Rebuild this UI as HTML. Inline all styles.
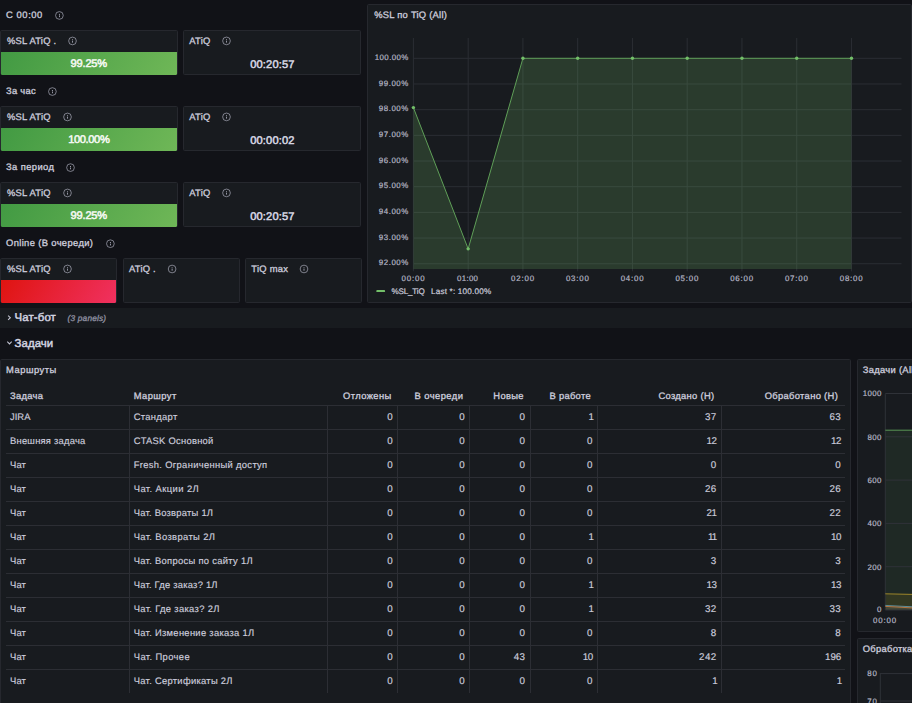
<!DOCTYPE html>
<html lang="ru">
<head>
<meta charset="utf-8">
<title>Dashboard</title>
<style>
html,body{margin:0;padding:0;}
body{width:912px;height:703px;overflow:hidden;background:#111217;position:relative;
 font-family:"Liberation Sans",sans-serif;color:#ccccdc;text-rendering:geometricPrecision;}
.t{position:absolute;white-space:nowrap;font-weight:400;-webkit-text-stroke:0.32px currentColor;}
.t.b{-webkit-text-stroke:0;}
.t.h{-webkit-text-stroke:0.45px currentColor;}
.t.r{-webkit-text-stroke:0.16px currentColor;}
.t.v{-webkit-text-stroke:0.5px currentColor;}
.p{position:absolute;box-sizing:border-box;background:#181b1f;border:1px solid #26282e;border-radius:1.5px;}
.ic{position:absolute;overflow:visible;}
.bar{position:absolute;border-radius:0 0 1.5px 1.5px;}
.hl{position:absolute;height:1px;background:#2c2e34;}
.vl{position:absolute;width:1px;background:#2c2e34;}
svg.ch{position:absolute;left:0;top:0;}
svg.ch text{font-family:"Liberation Sans",sans-serif;fill:#ccccdc;text-rendering:geometricPrecision;stroke:#ccccdc;stroke-width:0.2px;}
svg.ch text.ax{fill:#b4b5c4;stroke:#b4b5c4;}
</style>
</head>
<body>

<span class="t" style="top:8.10px;font-size:9.40px;line-height:14px;letter-spacing:0.582px;left:6.00px;">C 00:00</span>
<svg class="ic" style="left:53px;top:9px" width="12" height="12" viewBox="0 0 12 12"><g transform="translate(6.40 6.45)"><circle cx="0" cy="0" r="3.85" fill="none" stroke="#b4b5c5" stroke-width="0.65"/><rect x="-0.4" y="-0.05" width="0.8" height="1.75" fill="#b4b5c5"/><rect x="-0.45" y="-1.55" width="0.9" height="0.85" fill="#c4c5d3"/></g></svg>
<span class="t" style="top:84.10px;font-size:9.40px;line-height:14px;letter-spacing:0.276px;left:6.00px;">За час</span>
<svg class="ic" style="left:46px;top:85px" width="12" height="12" viewBox="0 0 12 12"><g transform="translate(6.40 6.55)"><circle cx="0" cy="0" r="3.85" fill="none" stroke="#b4b5c5" stroke-width="0.65"/><rect x="-0.4" y="-0.05" width="0.8" height="1.75" fill="#b4b5c5"/><rect x="-0.45" y="-1.55" width="0.9" height="0.85" fill="#c4c5d3"/></g></svg>
<span class="t" style="top:160.10px;font-size:9.40px;line-height:14px;letter-spacing:0.409px;left:6.00px;">За период</span>
<svg class="ic" style="left:64px;top:161px" width="12" height="12" viewBox="0 0 12 12"><g transform="translate(6.50 6.60)"><circle cx="0" cy="0" r="3.85" fill="none" stroke="#b4b5c5" stroke-width="0.65"/><rect x="-0.4" y="-0.05" width="0.8" height="1.75" fill="#b4b5c5"/><rect x="-0.45" y="-1.55" width="0.9" height="0.85" fill="#c4c5d3"/></g></svg>
<span class="t" style="top:236.10px;font-size:9.40px;line-height:14px;letter-spacing:0.358px;left:6.00px;">Online (В очереди)</span>
<svg class="ic" style="left:104px;top:237px" width="12" height="12" viewBox="0 0 12 12"><g transform="translate(6.40 6.70)"><circle cx="0" cy="0" r="3.85" fill="none" stroke="#b4b5c5" stroke-width="0.65"/><rect x="-0.4" y="-0.05" width="0.8" height="1.75" fill="#b4b5c5"/><rect x="-0.45" y="-1.55" width="0.9" height="0.85" fill="#c4c5d3"/></g></svg>
<div class="p" style="left:0.00px;top:30.00px;width:177.50px;height:45.00px;"></div>
<span class="t" style="top:33.60px;font-size:9.40px;line-height:14px;letter-spacing:0.231px;left:7.00px;">%SL ATiQ .</span>
<svg class="ic" style="left:66px;top:34px" width="12" height="12" viewBox="0 0 12 12"><g transform="translate(6.50 6.95)"><circle cx="0" cy="0" r="3.85" fill="none" stroke="#b4b5c5" stroke-width="0.65"/><rect x="-0.4" y="-0.05" width="0.8" height="1.75" fill="#b4b5c5"/><rect x="-0.45" y="-1.55" width="0.9" height="0.85" fill="#c4c5d3"/></g></svg>
<div class="bar" style="left:1px;top:52.00px;width:176px;height:22.80px;background:linear-gradient(120deg,#429a43,#6fb757)"></div>
<span class="t v" style="top:56.70px;font-size:11.10px;line-height:14px;letter-spacing:-0.191px;color:#f7faf5;left:70.55px;">99.25%</span>
<div class="p" style="left:183.25px;top:30.00px;width:177.50px;height:45.00px;"></div>
<span class="t" style="top:33.60px;font-size:9.40px;line-height:14px;letter-spacing:0.284px;left:189.25px;">ATiQ</span>
<svg class="ic" style="left:220px;top:34px" width="12" height="12" viewBox="0 0 12 12"><g transform="translate(6.50 6.90)"><circle cx="0" cy="0" r="3.85" fill="none" stroke="#b4b5c5" stroke-width="0.65"/><rect x="-0.4" y="-0.05" width="0.8" height="1.75" fill="#b4b5c5"/><rect x="-0.45" y="-1.55" width="0.9" height="0.85" fill="#c4c5d3"/></g></svg>
<span class="t v" style="top:57.50px;font-size:11.10px;line-height:14px;letter-spacing:0.130px;color:#d8d9e4;left:250.27px;">00:20:57</span>
<div class="p" style="left:0.00px;top:106.00px;width:177.50px;height:45.00px;"></div>
<span class="t" style="top:109.60px;font-size:9.40px;line-height:14px;letter-spacing:0.254px;left:7.00px;">%SL ATiQ</span>
<svg class="ic" style="left:61px;top:110px" width="12" height="12" viewBox="0 0 12 12"><g transform="translate(6.50 6.95)"><circle cx="0" cy="0" r="3.85" fill="none" stroke="#b4b5c5" stroke-width="0.65"/><rect x="-0.4" y="-0.05" width="0.8" height="1.75" fill="#b4b5c5"/><rect x="-0.45" y="-1.55" width="0.9" height="0.85" fill="#c4c5d3"/></g></svg>
<div class="bar" style="left:1px;top:128.00px;width:176px;height:22.80px;background:linear-gradient(120deg,#429a43,#6fb757)"></div>
<span class="t v" style="top:132.70px;font-size:11.10px;line-height:14px;letter-spacing:-0.367px;color:#f7faf5;left:68.17px;">100.00%</span>
<div class="p" style="left:183.25px;top:106.00px;width:177.50px;height:45.00px;"></div>
<span class="t" style="top:109.60px;font-size:9.40px;line-height:14px;letter-spacing:0.284px;left:189.25px;">ATiQ</span>
<svg class="ic" style="left:220px;top:110px" width="12" height="12" viewBox="0 0 12 12"><g transform="translate(6.50 6.90)"><circle cx="0" cy="0" r="3.85" fill="none" stroke="#b4b5c5" stroke-width="0.65"/><rect x="-0.4" y="-0.05" width="0.8" height="1.75" fill="#b4b5c5"/><rect x="-0.45" y="-1.55" width="0.9" height="0.85" fill="#c4c5d3"/></g></svg>
<span class="t v" style="top:133.50px;font-size:11.10px;line-height:14px;letter-spacing:0.130px;color:#d8d9e4;left:250.27px;">00:00:02</span>
<div class="p" style="left:0.00px;top:182.00px;width:177.50px;height:45.00px;"></div>
<span class="t" style="top:185.60px;font-size:9.40px;line-height:14px;letter-spacing:0.254px;left:7.00px;">%SL ATiQ</span>
<svg class="ic" style="left:61px;top:186px" width="12" height="12" viewBox="0 0 12 12"><g transform="translate(6.50 6.95)"><circle cx="0" cy="0" r="3.85" fill="none" stroke="#b4b5c5" stroke-width="0.65"/><rect x="-0.4" y="-0.05" width="0.8" height="1.75" fill="#b4b5c5"/><rect x="-0.45" y="-1.55" width="0.9" height="0.85" fill="#c4c5d3"/></g></svg>
<div class="bar" style="left:1px;top:204.00px;width:176px;height:22.80px;background:linear-gradient(120deg,#429a43,#6fb757)"></div>
<span class="t v" style="top:208.70px;font-size:11.10px;line-height:14px;letter-spacing:-0.191px;color:#f7faf5;left:70.55px;">99.25%</span>
<div class="p" style="left:183.25px;top:182.00px;width:177.50px;height:45.00px;"></div>
<span class="t" style="top:185.60px;font-size:9.40px;line-height:14px;letter-spacing:0.284px;left:189.25px;">ATiQ</span>
<svg class="ic" style="left:220px;top:186px" width="12" height="12" viewBox="0 0 12 12"><g transform="translate(6.50 6.90)"><circle cx="0" cy="0" r="3.85" fill="none" stroke="#b4b5c5" stroke-width="0.65"/><rect x="-0.4" y="-0.05" width="0.8" height="1.75" fill="#b4b5c5"/><rect x="-0.45" y="-1.55" width="0.9" height="0.85" fill="#c4c5d3"/></g></svg>
<span class="t v" style="top:209.50px;font-size:11.10px;line-height:14px;letter-spacing:0.130px;color:#d8d9e4;left:250.27px;">00:20:57</span>
<div class="p" style="left:0.00px;top:258.00px;width:116.75px;height:45.00px;"></div>
<span class="t" style="top:261.60px;font-size:9.40px;line-height:14px;letter-spacing:0.254px;left:7.00px;">%SL ATiQ</span>
<svg class="ic" style="left:61px;top:262px" width="12" height="12" viewBox="0 0 12 12"><g transform="translate(6.50 6.95)"><circle cx="0" cy="0" r="3.85" fill="none" stroke="#b4b5c5" stroke-width="0.65"/><rect x="-0.4" y="-0.05" width="0.8" height="1.75" fill="#b4b5c5"/><rect x="-0.45" y="-1.55" width="0.9" height="0.85" fill="#c4c5d3"/></g></svg>
<div class="bar" style="left:1px;top:280.00px;width:115.2px;height:22.8px;background:linear-gradient(120deg,#df1410,#f03160)"></div>
<div class="p" style="left:122.50px;top:258.00px;width:117.00px;height:45.00px;"></div>
<span class="t" style="top:261.60px;font-size:9.40px;line-height:14px;letter-spacing:0.235px;left:129.00px;">ATiQ .</span>
<svg class="ic" style="left:166px;top:263px" width="12" height="12" viewBox="0 0 12 12"><g transform="translate(6.10 6.00)"><circle cx="0" cy="0" r="3.85" fill="none" stroke="#b4b5c5" stroke-width="0.65"/><rect x="-0.4" y="-0.05" width="0.8" height="1.75" fill="#b4b5c5"/><rect x="-0.45" y="-1.55" width="0.9" height="0.85" fill="#c4c5d3"/></g></svg>
<div class="p" style="left:245.00px;top:258.00px;width:117.00px;height:45.00px;"></div>
<span class="t" style="top:261.60px;font-size:9.40px;line-height:14px;letter-spacing:0.262px;left:251.30px;">TiQ max</span>
<svg class="ic" style="left:298px;top:263px" width="12" height="12" viewBox="0 0 12 12"><g transform="translate(6.00 6.00)"><circle cx="0" cy="0" r="3.85" fill="none" stroke="#b4b5c5" stroke-width="0.65"/><rect x="-0.4" y="-0.05" width="0.8" height="1.75" fill="#b4b5c5"/><rect x="-0.45" y="-1.55" width="0.9" height="0.85" fill="#c4c5d3"/></g></svg>
<div style="position:absolute;left:0;top:308px;width:912px;height:20px;background:#181b1f"></div>
<svg class="ic" style="left:6px;top:312px" width="8" height="10" viewBox="0 0 8 10"><path d="M2.1 3.55 L4.35 5.7 L2.1 7.85" fill="none" stroke="#c4c5d4" stroke-width="1.05"/></svg>
<span class="t h" style="top:310.50px;font-size:11.40px;line-height:14px;letter-spacing:0.122px;color:#d5d6e3;left:14.60px;">Чат-бот</span>
<span class="t" style="top:310.90px;font-size:8.30px;line-height:14px;letter-spacing:0.179px;font-style:italic;color:#8f90a0;left:67.60px;">(3 panels)</span>
<svg class="ic" style="left:5px;top:338px" width="10" height="8" viewBox="0 0 10 8"><path d="M2.3 3.7 L4.5 5.9 L6.7 3.7" fill="none" stroke="#c4c5d4" stroke-width="1.05"/></svg>
<span class="t h" style="top:337.30px;font-size:11.40px;line-height:14px;letter-spacing:0.071px;color:#d5d6e3;left:14.60px;">Задачи</span>
<div class="p" style="left:0.00px;top:359.00px;width:851.00px;height:361.00px;"></div>
<span class="t" style="top:363.10px;font-size:9.40px;line-height:14px;letter-spacing:0.523px;left:6.00px;">Маршруты</span>
<span class="t" style="top:389.10px;font-size:9.40px;line-height:14px;letter-spacing:0.285px;left:10.00px;">Задача</span>
<span class="t" style="top:389.10px;font-size:9.40px;line-height:14px;letter-spacing:0.420px;left:133.75px;">Маршрут</span>
<span class="t" style="top:389.10px;font-size:9.40px;line-height:14px;letter-spacing:0.395px;left:343.00px;">Отложены</span>
<span class="t" style="top:389.10px;font-size:9.40px;line-height:14px;letter-spacing:0.443px;left:414.50px;">В очереди</span>
<span class="t" style="top:389.10px;font-size:9.40px;line-height:14px;letter-spacing:0.341px;left:493.30px;">Новые</span>
<span class="t" style="top:389.10px;font-size:9.40px;line-height:14px;letter-spacing:0.291px;left:549.50px;">В работе</span>
<span class="t" style="top:389.10px;font-size:9.40px;line-height:14px;letter-spacing:0.290px;left:658.50px;">Создано (Н)</span>
<span class="t" style="top:389.10px;font-size:9.40px;line-height:14px;letter-spacing:0.317px;left:764.75px;">Обработано (Н)</span>
<div class="hl" style="left:6px;top:404.50px;width:839px"></div>
<span class="t r" style="top:409.60px;font-size:9.40px;line-height:14px;letter-spacing:0.032px;left:10.00px;">JIRA</span>
<span class="t r" style="top:409.60px;font-size:9.40px;line-height:14px;letter-spacing:0.306px;left:133.75px;">Стандарт</span>
<span class="t r" style="top:410.60px;font-size:9.80px;line-height:14px;letter-spacing:0.350px;left:387.20px;">0</span>
<span class="t r" style="top:410.60px;font-size:9.80px;line-height:14px;letter-spacing:0.350px;left:459.20px;">0</span>
<span class="t r" style="top:410.60px;font-size:9.80px;line-height:14px;letter-spacing:0.350px;left:519.45px;">0</span>
<span class="t r" style="top:410.60px;font-size:9.80px;line-height:14px;letter-spacing:-1.150px;left:588.45px;">1</span>
<span class="t r" style="top:410.60px;font-size:9.80px;line-height:14px;letter-spacing:0.350px;left:704.90px;">37</span>
<span class="t r" style="top:410.60px;font-size:9.80px;line-height:14px;letter-spacing:0.350px;left:829.40px;">63</span>
<div class="hl" style="left:6px;top:428.50px;width:839px"></div>
<span class="t r" style="top:433.60px;font-size:9.40px;line-height:14px;letter-spacing:0.240px;left:10.00px;">Внешняя задача</span>
<span class="t r" style="top:433.60px;font-size:9.40px;line-height:14px;letter-spacing:0.261px;left:133.75px;">CTASK Основной</span>
<span class="t r" style="top:434.60px;font-size:9.80px;line-height:14px;letter-spacing:0.350px;left:387.20px;">0</span>
<span class="t r" style="top:434.60px;font-size:9.80px;line-height:14px;letter-spacing:0.350px;left:459.20px;">0</span>
<span class="t r" style="top:434.60px;font-size:9.80px;line-height:14px;letter-spacing:0.350px;left:519.45px;">0</span>
<span class="t r" style="top:434.60px;font-size:9.80px;line-height:14px;letter-spacing:0.350px;left:586.95px;">0</span>
<span class="t r" style="top:434.60px;font-size:9.80px;line-height:14px;letter-spacing:-0.400px;left:706.40px;">12</span>
<span class="t r" style="top:434.60px;font-size:9.80px;line-height:14px;letter-spacing:-0.400px;left:830.90px;">12</span>
<div class="hl" style="left:6px;top:452.50px;width:839px"></div>
<span class="t r" style="top:457.60px;font-size:9.40px;line-height:14px;letter-spacing:0.136px;left:10.00px;">Чат</span>
<span class="t r" style="top:457.60px;font-size:9.40px;line-height:14px;letter-spacing:0.326px;left:133.75px;">Fresh. Ограниченный доступ</span>
<span class="t r" style="top:458.60px;font-size:9.80px;line-height:14px;letter-spacing:0.350px;left:387.20px;">0</span>
<span class="t r" style="top:458.60px;font-size:9.80px;line-height:14px;letter-spacing:0.350px;left:459.20px;">0</span>
<span class="t r" style="top:458.60px;font-size:9.80px;line-height:14px;letter-spacing:0.350px;left:519.45px;">0</span>
<span class="t r" style="top:458.60px;font-size:9.80px;line-height:14px;letter-spacing:0.350px;left:586.95px;">0</span>
<span class="t r" style="top:458.60px;font-size:9.80px;line-height:14px;letter-spacing:0.350px;left:710.70px;">0</span>
<span class="t r" style="top:458.60px;font-size:9.80px;line-height:14px;letter-spacing:0.350px;left:835.20px;">0</span>
<div class="hl" style="left:6px;top:476.50px;width:839px"></div>
<span class="t r" style="top:481.60px;font-size:9.40px;line-height:14px;letter-spacing:0.136px;left:10.00px;">Чат</span>
<span class="t r" style="top:481.60px;font-size:9.40px;line-height:14px;letter-spacing:0.419px;left:133.75px;">Чат. Акции 2Л</span>
<span class="t r" style="top:482.60px;font-size:9.80px;line-height:14px;letter-spacing:0.350px;left:387.20px;">0</span>
<span class="t r" style="top:482.60px;font-size:9.80px;line-height:14px;letter-spacing:0.350px;left:459.20px;">0</span>
<span class="t r" style="top:482.60px;font-size:9.80px;line-height:14px;letter-spacing:0.350px;left:519.45px;">0</span>
<span class="t r" style="top:482.60px;font-size:9.80px;line-height:14px;letter-spacing:0.350px;left:586.95px;">0</span>
<span class="t r" style="top:482.60px;font-size:9.80px;line-height:14px;letter-spacing:0.350px;left:704.90px;">26</span>
<span class="t r" style="top:482.60px;font-size:9.80px;line-height:14px;letter-spacing:0.350px;left:829.40px;">26</span>
<div class="hl" style="left:6px;top:500.50px;width:839px"></div>
<span class="t r" style="top:505.60px;font-size:9.40px;line-height:14px;letter-spacing:0.136px;left:10.00px;">Чат</span>
<span class="t r" style="top:505.60px;font-size:9.40px;line-height:14px;letter-spacing:0.244px;left:133.75px;">Чат. Возвраты 1Л</span>
<span class="t r" style="top:506.60px;font-size:9.80px;line-height:14px;letter-spacing:0.350px;left:387.20px;">0</span>
<span class="t r" style="top:506.60px;font-size:9.80px;line-height:14px;letter-spacing:0.350px;left:459.20px;">0</span>
<span class="t r" style="top:506.60px;font-size:9.80px;line-height:14px;letter-spacing:0.350px;left:519.45px;">0</span>
<span class="t r" style="top:506.60px;font-size:9.80px;line-height:14px;letter-spacing:0.350px;left:586.95px;">0</span>
<span class="t r" style="top:506.60px;font-size:9.80px;line-height:14px;letter-spacing:-0.400px;left:706.40px;">21</span>
<span class="t r" style="top:506.60px;font-size:9.80px;line-height:14px;letter-spacing:0.350px;left:829.40px;">22</span>
<div class="hl" style="left:6px;top:524.50px;width:839px"></div>
<span class="t r" style="top:529.60px;font-size:9.40px;line-height:14px;letter-spacing:0.136px;left:10.00px;">Чат</span>
<span class="t r" style="top:529.60px;font-size:9.40px;line-height:14px;letter-spacing:0.369px;left:133.75px;">Чат. Возвраты 2Л</span>
<span class="t r" style="top:530.60px;font-size:9.80px;line-height:14px;letter-spacing:0.350px;left:387.20px;">0</span>
<span class="t r" style="top:530.60px;font-size:9.80px;line-height:14px;letter-spacing:0.350px;left:459.20px;">0</span>
<span class="t r" style="top:530.60px;font-size:9.80px;line-height:14px;letter-spacing:0.350px;left:519.45px;">0</span>
<span class="t r" style="top:530.60px;font-size:9.80px;line-height:14px;letter-spacing:-1.150px;left:588.45px;">1</span>
<span class="t r" style="top:530.60px;font-size:9.80px;line-height:14px;letter-spacing:-0.787px;left:707.90px;">11</span>
<span class="t r" style="top:530.60px;font-size:9.80px;line-height:14px;letter-spacing:-0.400px;left:830.90px;">10</span>
<div class="hl" style="left:6px;top:548.50px;width:839px"></div>
<span class="t r" style="top:553.60px;font-size:9.40px;line-height:14px;letter-spacing:0.136px;left:10.00px;">Чат</span>
<span class="t r" style="top:553.60px;font-size:9.40px;line-height:14px;letter-spacing:0.308px;left:133.75px;">Чат. Вопросы по сайту 1Л</span>
<span class="t r" style="top:554.60px;font-size:9.80px;line-height:14px;letter-spacing:0.350px;left:387.20px;">0</span>
<span class="t r" style="top:554.60px;font-size:9.80px;line-height:14px;letter-spacing:0.350px;left:459.20px;">0</span>
<span class="t r" style="top:554.60px;font-size:9.80px;line-height:14px;letter-spacing:0.350px;left:519.45px;">0</span>
<span class="t r" style="top:554.60px;font-size:9.80px;line-height:14px;letter-spacing:0.350px;left:586.95px;">0</span>
<span class="t r" style="top:554.60px;font-size:9.80px;line-height:14px;letter-spacing:0.350px;left:710.70px;">3</span>
<span class="t r" style="top:554.60px;font-size:9.80px;line-height:14px;letter-spacing:0.350px;left:835.20px;">3</span>
<div class="hl" style="left:6px;top:572.50px;width:839px"></div>
<span class="t r" style="top:577.60px;font-size:9.40px;line-height:14px;letter-spacing:0.136px;left:10.00px;">Чат</span>
<span class="t r" style="top:577.60px;font-size:9.40px;line-height:14px;letter-spacing:0.229px;left:133.75px;">Чат. Где заказ? 1Л</span>
<span class="t r" style="top:578.60px;font-size:9.80px;line-height:14px;letter-spacing:0.350px;left:387.20px;">0</span>
<span class="t r" style="top:578.60px;font-size:9.80px;line-height:14px;letter-spacing:0.350px;left:459.20px;">0</span>
<span class="t r" style="top:578.60px;font-size:9.80px;line-height:14px;letter-spacing:0.350px;left:519.45px;">0</span>
<span class="t r" style="top:578.60px;font-size:9.80px;line-height:14px;letter-spacing:-1.150px;left:588.45px;">1</span>
<span class="t r" style="top:578.60px;font-size:9.80px;line-height:14px;letter-spacing:-0.400px;left:706.40px;">13</span>
<span class="t r" style="top:578.60px;font-size:9.80px;line-height:14px;letter-spacing:-0.400px;left:830.90px;">13</span>
<div class="hl" style="left:6px;top:596.50px;width:839px"></div>
<span class="t r" style="top:601.60px;font-size:9.40px;line-height:14px;letter-spacing:0.136px;left:10.00px;">Чат</span>
<span class="t r" style="top:601.60px;font-size:9.40px;line-height:14px;letter-spacing:0.340px;left:133.75px;">Чат. Где заказ? 2Л</span>
<span class="t r" style="top:602.60px;font-size:9.80px;line-height:14px;letter-spacing:0.350px;left:387.20px;">0</span>
<span class="t r" style="top:602.60px;font-size:9.80px;line-height:14px;letter-spacing:0.350px;left:459.20px;">0</span>
<span class="t r" style="top:602.60px;font-size:9.80px;line-height:14px;letter-spacing:0.350px;left:519.45px;">0</span>
<span class="t r" style="top:602.60px;font-size:9.80px;line-height:14px;letter-spacing:-1.150px;left:588.45px;">1</span>
<span class="t r" style="top:602.60px;font-size:9.80px;line-height:14px;letter-spacing:0.350px;left:704.90px;">32</span>
<span class="t r" style="top:602.60px;font-size:9.80px;line-height:14px;letter-spacing:0.350px;left:829.40px;">33</span>
<div class="hl" style="left:6px;top:620.50px;width:839px"></div>
<span class="t r" style="top:625.60px;font-size:9.40px;line-height:14px;letter-spacing:0.136px;left:10.00px;">Чат</span>
<span class="t r" style="top:625.60px;font-size:9.40px;line-height:14px;letter-spacing:0.302px;left:133.75px;">Чат. Изменение заказа 1Л</span>
<span class="t r" style="top:626.60px;font-size:9.80px;line-height:14px;letter-spacing:0.350px;left:387.20px;">0</span>
<span class="t r" style="top:626.60px;font-size:9.80px;line-height:14px;letter-spacing:0.350px;left:459.20px;">0</span>
<span class="t r" style="top:626.60px;font-size:9.80px;line-height:14px;letter-spacing:0.350px;left:519.45px;">0</span>
<span class="t r" style="top:626.60px;font-size:9.80px;line-height:14px;letter-spacing:0.350px;left:586.95px;">0</span>
<span class="t r" style="top:626.60px;font-size:9.80px;line-height:14px;letter-spacing:0.350px;left:710.70px;">8</span>
<span class="t r" style="top:626.60px;font-size:9.80px;line-height:14px;letter-spacing:0.350px;left:835.20px;">8</span>
<div class="hl" style="left:6px;top:644.50px;width:839px"></div>
<span class="t r" style="top:649.60px;font-size:9.40px;line-height:14px;letter-spacing:0.136px;left:10.00px;">Чат</span>
<span class="t r" style="top:649.60px;font-size:9.40px;line-height:14px;letter-spacing:0.388px;left:133.75px;">Чат. Прочее</span>
<span class="t r" style="top:650.60px;font-size:9.80px;line-height:14px;letter-spacing:0.350px;left:387.20px;">0</span>
<span class="t r" style="top:650.60px;font-size:9.80px;line-height:14px;letter-spacing:0.350px;left:459.20px;">0</span>
<span class="t r" style="top:650.60px;font-size:9.80px;line-height:14px;letter-spacing:0.350px;left:513.65px;">43</span>
<span class="t r" style="top:650.60px;font-size:9.80px;line-height:14px;letter-spacing:-0.400px;left:582.65px;">10</span>
<span class="t r" style="top:650.60px;font-size:9.80px;line-height:14px;letter-spacing:0.350px;left:699.10px;">242</span>
<span class="t r" style="top:650.60px;font-size:9.80px;line-height:14px;letter-spacing:-0.150px;left:825.10px;">196</span>
<div class="hl" style="left:6px;top:668.50px;width:839px"></div>
<span class="t r" style="top:673.60px;font-size:9.40px;line-height:14px;letter-spacing:0.136px;left:10.00px;">Чат</span>
<span class="t r" style="top:673.60px;font-size:9.40px;line-height:14px;letter-spacing:0.291px;left:133.75px;">Чат. Сертификаты 2Л</span>
<span class="t r" style="top:674.60px;font-size:9.80px;line-height:14px;letter-spacing:0.350px;left:387.20px;">0</span>
<span class="t r" style="top:674.60px;font-size:9.80px;line-height:14px;letter-spacing:0.350px;left:459.20px;">0</span>
<span class="t r" style="top:674.60px;font-size:9.80px;line-height:14px;letter-spacing:0.350px;left:519.45px;">0</span>
<span class="t r" style="top:674.60px;font-size:9.80px;line-height:14px;letter-spacing:0.350px;left:586.95px;">0</span>
<span class="t r" style="top:674.60px;font-size:9.80px;line-height:14px;letter-spacing:-1.150px;left:712.20px;">1</span>
<span class="t r" style="top:674.60px;font-size:9.80px;line-height:14px;letter-spacing:-1.150px;left:836.70px;">1</span>
<div class="vl" style="left:128.75px;top:405px;height:288px"></div>
<div class="vl" style="left:327.00px;top:405px;height:288px"></div>
<div class="vl" style="left:396.75px;top:405px;height:288px"></div>
<div class="vl" style="left:469.00px;top:405px;height:288px"></div>
<div class="vl" style="left:529.75px;top:405px;height:288px"></div>
<div class="vl" style="left:596.75px;top:405px;height:288px"></div>
<div class="vl" style="left:721.00px;top:405px;height:288px"></div>
<div class="p" style="left:367.00px;top:4.00px;width:544.50px;height:298.50px;"></div>
<span class="t" style="top:8.10px;font-size:9.40px;line-height:14px;letter-spacing:0.240px;left:374.25px;">%SL по TiQ (All)</span>
<svg class="ch" width="912" height="703" viewBox="0 0 912 703">
<path d="M413.40 38V271.3 M468.16 38V271.3 M522.92 38V271.3 M577.68 38V271.3 M632.44 38V271.3 M687.20 38V271.3 M741.96 38V271.3 M796.72 38V271.3 M851.48 38V271.3 M413.40 263.74H901.5 M413.40 238.06H901.5 M413.40 212.38H901.5 M413.40 186.70H901.5 M413.40 161.02H901.5 M413.40 135.34H901.5 M413.40 109.66H901.5 M413.40 83.98H901.5 M413.40 58.30H901.5" stroke="#2b2e34" stroke-width="1" fill="none"/>
<path d="M413.40 107.61 L468.16 248.85 L522.92 58.30 L577.68 58.30 L632.44 58.30 L687.20 58.30 L741.96 58.30 L796.72 58.30 L851.48 58.30 L851.48 269 L413.40 269 Z" fill="#73bf69" fill-opacity="0.2"/>
<path d="M413.40 107.61 L468.16 248.85 L522.92 58.30 L577.68 58.30 L632.44 58.30 L687.20 58.30 L741.96 58.30 L796.72 58.30 L851.48 58.30" fill="none" stroke="#5f9f58" stroke-width="1"/>
<circle cx="413.40" cy="107.61" r="1.7" fill="#73bf69"/>
<circle cx="468.16" cy="248.85" r="1.7" fill="#73bf69"/>
<circle cx="522.92" cy="58.30" r="1.7" fill="#73bf69"/>
<circle cx="577.68" cy="58.30" r="1.7" fill="#73bf69"/>
<circle cx="632.44" cy="58.30" r="1.7" fill="#73bf69"/>
<circle cx="687.20" cy="58.30" r="1.7" fill="#73bf69"/>
<circle cx="741.96" cy="58.30" r="1.7" fill="#73bf69"/>
<circle cx="796.72" cy="58.30" r="1.7" fill="#73bf69"/>
<circle cx="851.48" cy="58.30" r="1.7" fill="#73bf69"/>
<text class="ax" x="408.3" y="265.34" font-size="7.9" text-anchor="end" textLength="29.5" lengthAdjust="spacing">92.00%</text>
<text class="ax" x="408.3" y="239.66" font-size="7.9" text-anchor="end" textLength="29.5" lengthAdjust="spacing">93.00%</text>
<text class="ax" x="408.3" y="213.98" font-size="7.9" text-anchor="end" textLength="29.5" lengthAdjust="spacing">94.00%</text>
<text class="ax" x="408.3" y="188.30" font-size="7.9" text-anchor="end" textLength="29.5" lengthAdjust="spacing">95.00%</text>
<text class="ax" x="408.3" y="162.62" font-size="7.9" text-anchor="end" textLength="29.5" lengthAdjust="spacing">96.00%</text>
<text class="ax" x="408.3" y="136.94" font-size="7.9" text-anchor="end" textLength="29.5" lengthAdjust="spacing">97.00%</text>
<text class="ax" x="408.3" y="111.26" font-size="7.9" text-anchor="end" textLength="29.5" lengthAdjust="spacing">98.00%</text>
<text class="ax" x="408.3" y="85.58" font-size="7.9" text-anchor="end" textLength="29.5" lengthAdjust="spacing">99.00%</text>
<text class="ax" x="408.3" y="59.90" font-size="7.9" text-anchor="end" textLength="33.5" lengthAdjust="spacing">100.00%</text>
<text class="ax" x="413.10" y="280.5" font-size="7.9" text-anchor="middle" textLength="23.0" lengthAdjust="spacing">00:00</text>
<text class="ax" x="467.56" y="280.5" font-size="7.9" text-anchor="middle" textLength="20.9" lengthAdjust="spacing">01:00</text>
<text class="ax" x="522.62" y="280.5" font-size="7.9" text-anchor="middle" textLength="23.0" lengthAdjust="spacing">02:00</text>
<text class="ax" x="577.38" y="280.5" font-size="7.9" text-anchor="middle" textLength="23.0" lengthAdjust="spacing">03:00</text>
<text class="ax" x="632.14" y="280.5" font-size="7.9" text-anchor="middle" textLength="23.0" lengthAdjust="spacing">04:00</text>
<text class="ax" x="686.90" y="280.5" font-size="7.9" text-anchor="middle" textLength="23.0" lengthAdjust="spacing">05:00</text>
<text class="ax" x="741.66" y="280.5" font-size="7.9" text-anchor="middle" textLength="23.0" lengthAdjust="spacing">06:00</text>
<text class="ax" x="796.42" y="280.5" font-size="7.9" text-anchor="middle" textLength="23.0" lengthAdjust="spacing">07:00</text>
<text class="ax" x="851.18" y="280.5" font-size="7.9" text-anchor="middle" textLength="23.0" lengthAdjust="spacing">08:00</text>
<rect x="376.3" y="290.1" width="8.8" height="2" rx="0.9" fill="#73bf69"/>
<text x="391.4" y="293.9" font-size="8.1" textLength="33.4" lengthAdjust="spacing">%SL_TiQ</text>
<text x="431" y="293.9" font-size="8.1" textLength="60.1" lengthAdjust="spacing">Last *: 100.00%</text>
</svg>
<div class="p" style="left:857.00px;top:359.00px;width:73.00px;height:272.50px;"></div>
<span class="t" style="top:363.10px;font-size:9.40px;line-height:14px;letter-spacing:0.302px;left:862.75px;">Задачи (All)</span>
<div class="p" style="left:857.00px;top:638.25px;width:73.00px;height:81.75px;"></div>
<span class="t" style="top:641.50px;font-size:9.40px;line-height:14px;letter-spacing:0.288px;left:862.75px;">Обработка</span>
<svg class="ch" width="912" height="703" viewBox="0 0 912 703">
<rect x="885.3" y="430" width="30" height="180" fill="#73bf69" fill-opacity="0.09"/>
<rect x="885.3" y="594" width="30" height="16" fill="#f2cc0c" fill-opacity="0.09"/>
<rect x="885.3" y="606" width="30" height="4" fill="#ccccdc" fill-opacity="0.12"/>
<path d="M885.3 610.00H912 M885.3 566.70H912 M885.3 523.40H912 M885.3 480.10H912 M885.3 436.80H912 M885.3 393.50H912 M885.3 394.2V610" stroke="#2f3238" stroke-width="1" fill="none"/>
<path d="M885.3 430.2H912" stroke="#558c50" stroke-width="1.1"/>
<path d="M885.3 593.8L912 594.4" stroke="#a88d2a" stroke-width="0.9"/>
<path d="M885.3 605.4L912 606.8" stroke="#63a0b4" stroke-width="0.8"/>
<path d="M885.3 606.4L912 607.9" stroke="#d08045" stroke-width="0.8"/>
<text class="ax" x="881.3" y="612.40" font-size="7.9" text-anchor="end" textLength="4.4" lengthAdjust="spacing">0</text>
<text class="ax" x="881.3" y="569.90" font-size="7.9" text-anchor="end" textLength="13.8" lengthAdjust="spacing">200</text>
<text class="ax" x="881.3" y="526.40" font-size="7.9" text-anchor="end" textLength="13.8" lengthAdjust="spacing">400</text>
<text class="ax" x="881.3" y="482.90" font-size="7.9" text-anchor="end" textLength="13.8" lengthAdjust="spacing">600</text>
<text class="ax" x="881.3" y="439.65" font-size="7.9" text-anchor="end" textLength="13.8" lengthAdjust="spacing">800</text>
<text class="ax" x="881.3" y="395.90" font-size="7.9" text-anchor="end" textLength="18.5" lengthAdjust="spacing">1000</text>
<text class="ax" x="884.6" y="622.9" font-size="7.9" text-anchor="middle" textLength="23.0" lengthAdjust="spacing">00:00</text>
<path d="M880.3 673.6H912 M880.3 701H912 M880.3 673V703" stroke="#2f3238" stroke-width="1" fill="none"/>
<text class="ax" x="876.8" y="675.9" font-size="7.9" text-anchor="end" textLength="9.6" lengthAdjust="spacing">80</text>
<text class="ax" x="876.8" y="704.1" font-size="7.9" text-anchor="end" textLength="9.6" lengthAdjust="spacing">70</text>
</svg>
</body>
</html>
